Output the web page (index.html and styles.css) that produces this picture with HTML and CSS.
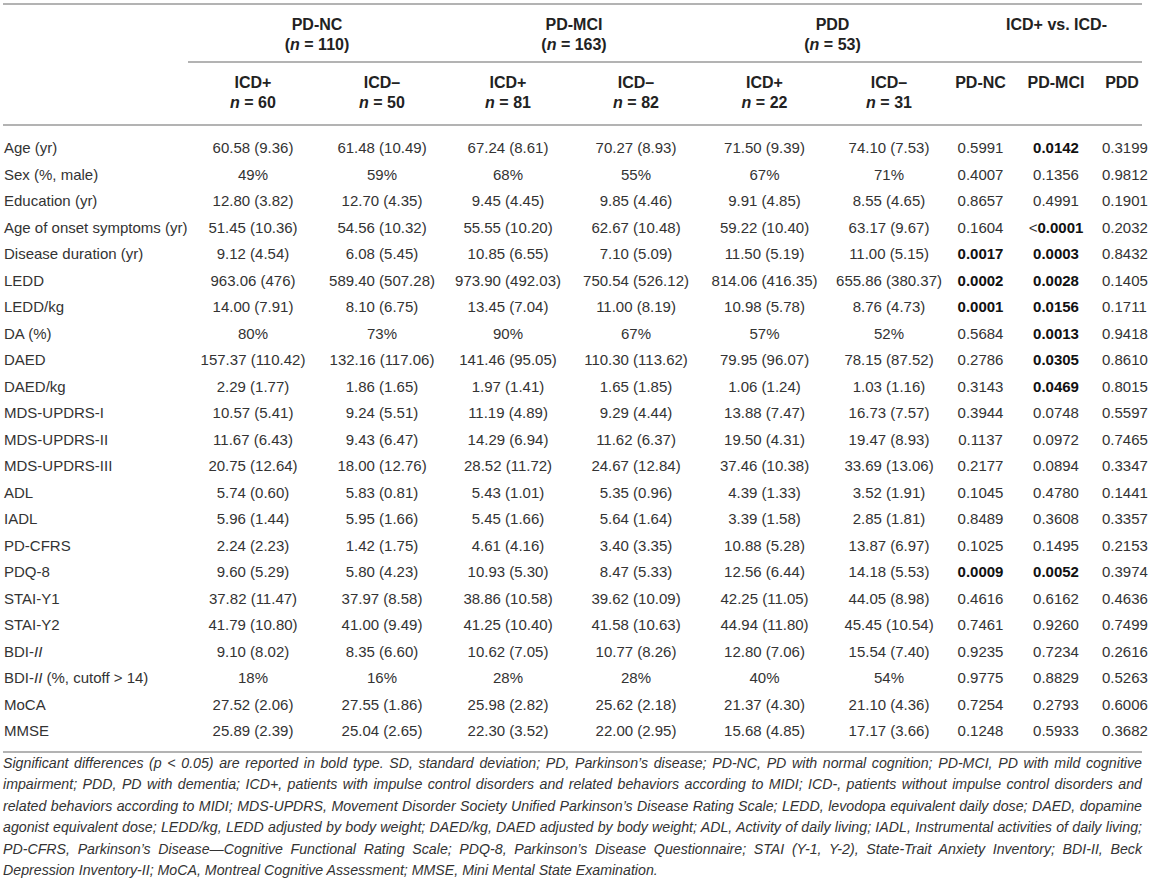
FILE: index.html
```html
<!DOCTYPE html>
<html lang="en">
<head>
    <meta charset="UTF-8">
    <meta name="viewport" content="width=device-width, initial-scale=1.0">
    <title>ICD+ vs. ICD- by cognitive group</title>
    <link rel="stylesheet" href="styles.css">
</head>
<body>

    <div class="page">
        <table class="stats">
            <colgroup>
                <col class="col-label">
                <col class="col-a">
                <col class="col-b">
                <col class="col-c">
                <col class="col-d">
                <col class="col-e">
                <col class="col-f">
                <col class="col-p1">
                <col class="col-p2">
                <col class="col-p3">
            </colgroup>
            <thead>
                <tr class="group-row">
                    <th class="blank"></th>
                    <th colspan="2" class="group">PD-NC<br>(<i>n</i> = 110)</th>
                    <th colspan="2" class="group">PD-MCI<br>(<i>n</i> = 163)</th>
                    <th colspan="2" class="group group-pdd">PDD<br>(<i>n</i> = 53)</th>
                    <th colspan="3" class="group group-cmp">ICD+ vs. ICD-</th>
                </tr>
                <tr class="sub-row">
                    <th class="blank"></th>
                    <th>ICD+<br><i>n</i> = 60</th>
                    <th>ICD–<br><i>n</i> = 50</th>
                    <th>ICD+<br><i>n</i> = 81</th>
                    <th>ICD–<br><i>n</i> = 82</th>
                    <th>ICD+<br><i>n</i> = 22</th>
                    <th>ICD–<br><i>n</i> = 31</th>
                    <th>PD-NC</th>
                    <th>PD-MCI</th>
                    <th>PDD</th>
                </tr>
            </thead>
            <tbody>
                <tr><td>Age (yr)</td><td>60.58 (9.36)</td><td>61.48 (10.49)</td><td>67.24 (8.61)</td><td>70.27 (8.93)</td><td>71.50 (9.39)</td><td>74.10 (7.53)</td><td>0.5991</td><td><b>0.0142</b></td><td>0.3199</td></tr>
                <tr><td>Sex (%, male)</td><td>49%</td><td>59%</td><td>68%</td><td>55%</td><td>67%</td><td>71%</td><td>0.4007</td><td>0.1356</td><td>0.9812</td></tr>
                <tr><td>Education (yr)</td><td>12.80 (3.82)</td><td>12.70 (4.35)</td><td>9.45 (4.45)</td><td>9.85 (4.46)</td><td>9.91 (4.85)</td><td>8.55 (4.65)</td><td>0.8657</td><td>0.4991</td><td>0.1901</td></tr>
                <tr><td>Age of onset symptoms (yr)</td><td>51.45 (10.36)</td><td>54.56 (10.32)</td><td>55.55 (10.20)</td><td>62.67 (10.48)</td><td>59.22 (10.40)</td><td>63.17 (9.67)</td><td>0.1604</td><td>&lt;<b>0.0001</b></td><td>0.2032</td></tr>
                <tr><td>Disease duration (yr)</td><td>9.12 (4.54)</td><td>6.08 (5.45)</td><td>10.85 (6.55)</td><td>7.10 (5.09)</td><td>11.50 (5.19)</td><td>11.00 (5.15)</td><td><b>0.0017</b></td><td><b>0.0003</b></td><td>0.8432</td></tr>
                <tr><td>LEDD</td><td>963.06 (476)</td><td>589.40 (507.28)</td><td>973.90 (492.03)</td><td>750.54 (526.12)</td><td>814.06 (416.35)</td><td>655.86 (380.37)</td><td><b>0.0002</b></td><td><b>0.0028</b></td><td>0.1405</td></tr>
                <tr><td>LEDD/kg</td><td>14.00 (7.91)</td><td>8.10 (6.75)</td><td>13.45 (7.04)</td><td>11.00 (8.19)</td><td>10.98 (5.78)</td><td>8.76 (4.73)</td><td><b>0.0001</b></td><td><b>0.0156</b></td><td>0.1711</td></tr>
                <tr><td>DA (%)</td><td>80%</td><td>73%</td><td>90%</td><td>67%</td><td>57%</td><td>52%</td><td>0.5684</td><td><b>0.0013</b></td><td>0.9418</td></tr>
                <tr><td>DAED</td><td>157.37 (110.42)</td><td>132.16 (117.06)</td><td>141.46 (95.05)</td><td>110.30 (113.62)</td><td>79.95 (96.07)</td><td>78.15 (87.52)</td><td>0.2786</td><td><b>0.0305</b></td><td>0.8610</td></tr>
                <tr><td>DAED/kg</td><td>2.29 (1.77)</td><td>1.86 (1.65)</td><td>1.97 (1.41)</td><td>1.65 (1.85)</td><td>1.06 (1.24)</td><td>1.03 (1.16)</td><td>0.3143</td><td><b>0.0469</b></td><td>0.8015</td></tr>
                <tr><td>MDS-UPDRS-I</td><td>10.57 (5.41)</td><td>9.24 (5.51)</td><td>11.19 (4.89)</td><td>9.29 (4.44)</td><td>13.88 (7.47)</td><td>16.73 (7.57)</td><td>0.3944</td><td>0.0748</td><td>0.5597</td></tr>
                <tr><td>MDS-UPDRS-II</td><td>11.67 (6.43)</td><td>9.43 (6.47)</td><td>14.29 (6.94)</td><td>11.62 (6.37)</td><td>19.50 (4.31)</td><td>19.47 (8.93)</td><td>0.1137</td><td>0.0972</td><td>0.7465</td></tr>
                <tr><td>MDS-UPDRS-III</td><td>20.75 (12.64)</td><td>18.00 (12.76)</td><td>28.52 (11.72)</td><td>24.67 (12.84)</td><td>37.46 (10.38)</td><td>33.69 (13.06)</td><td>0.2177</td><td>0.0894</td><td>0.3347</td></tr>
                <tr><td>ADL</td><td>5.74 (0.60)</td><td>5.83 (0.81)</td><td>5.43 (1.01)</td><td>5.35 (0.96)</td><td>4.39 (1.33)</td><td>3.52 (1.91)</td><td>0.1045</td><td>0.4780</td><td>0.1441</td></tr>
                <tr><td>IADL</td><td>5.96 (1.44)</td><td>5.95 (1.66)</td><td>5.45 (1.66)</td><td>5.64 (1.64)</td><td>3.39 (1.58)</td><td>2.85 (1.81)</td><td>0.8489</td><td>0.3608</td><td>0.3357</td></tr>
                <tr><td>PD-CFRS</td><td>2.24 (2.23)</td><td>1.42 (1.75)</td><td>4.61 (4.16)</td><td>3.40 (3.35)</td><td>10.88 (5.28)</td><td>13.87 (6.97)</td><td>0.1025</td><td>0.1495</td><td>0.2153</td></tr>
                <tr><td>PDQ-8</td><td>9.60 (5.29)</td><td>5.80 (4.23)</td><td>10.93 (5.30)</td><td>8.47 (5.33)</td><td>12.56 (6.44)</td><td>14.18 (5.53)</td><td><b>0.0009</b></td><td><b>0.0052</b></td><td>0.3974</td></tr>
                <tr><td>STAI-Y1</td><td>37.82 (11.47)</td><td>37.97 (8.58)</td><td>38.86 (10.58)</td><td>39.62 (10.09)</td><td>42.25 (11.05)</td><td>44.05 (8.98)</td><td>0.4616</td><td>0.6162</td><td>0.4636</td></tr>
                <tr><td>STAI-Y2</td><td>41.79 (10.80)</td><td>41.00 (9.49)</td><td>41.25 (10.40)</td><td>41.58 (10.63)</td><td>44.94 (11.80)</td><td>45.45 (10.54)</td><td>0.7461</td><td>0.9260</td><td>0.7499</td></tr>
                <tr><td>BDI-<i>II</i></td><td>9.10 (8.02)</td><td>8.35 (6.60)</td><td>10.62 (7.05)</td><td>10.77 (8.26)</td><td>12.80 (7.06)</td><td>15.54 (7.40)</td><td>0.9235</td><td>0.7234</td><td>0.2616</td></tr>
                <tr><td>BDI-<i>II</i> (%, cutoff &gt; 14)</td><td>18%</td><td>16%</td><td>28%</td><td>28%</td><td>40%</td><td>54%</td><td>0.9775</td><td>0.8829</td><td>0.5263</td></tr>
                <tr><td>MoCA</td><td>27.52 (2.06)</td><td>27.55 (1.86)</td><td>25.98 (2.82)</td><td>25.62 (2.18)</td><td>21.37 (4.30)</td><td>21.10 (4.36)</td><td>0.7254</td><td>0.2793</td><td>0.6006</td></tr>
                <tr><td>MMSE</td><td>25.89 (2.39)</td><td>25.04 (2.65)</td><td>22.30 (3.52)</td><td>22.00 (2.95)</td><td>15.68 (4.85)</td><td>17.17 (3.66)</td><td>0.1248</td><td>0.5933</td><td>0.3682</td></tr>
            </tbody>
        </table>

        <p class="note">Significant differences (p &lt; 0.05) are reported in bold type. SD, standard deviation; PD, Parkinson’s disease; PD-NC, PD with normal cognition; PD-MCI, PD with mild cognitive impairment; PDD, PD with dementia; ICD+, patients with impulse control disorders and related behaviors according to MIDI; ICD-, patients without impulse control disorders and related behaviors according to MIDI; MDS-UPDRS, Movement Disorder Society Unified Parkinson’s Disease Rating Scale; LEDD, levodopa equivalent daily dose; DAED, dopamine agonist equivalent dose; LEDD/kg, LEDD adjusted by body weight; DAED/kg, DAED adjusted by body weight; ADL, Activity of daily living; IADL, Instrumental activities of daily living; PD-CFRS, Parkinson’s Disease—Cognitive Functional Rating Scale; PDQ-8, Parkinson’s Disease Questionnaire; STAI (Y-1, Y-2), State-Trait Anxiety Inventory; BDI-II, Beck Depression Inventory-II; MoCA, Montreal Cognitive Assessment; MMSE, Mini Mental State Examination.</p>
    </div>

</body>
</html>
```

FILE: styles.css
```css
body {
    margin: 0;
    background: #fff;
    color: #333;
    font-family: "Liberation Sans", Arial, sans-serif;
}
.page {
    width: 1139px;
    padding: 3px 0 0 3px;
}
.stats {
    width: 1139px;
    table-layout: fixed;
    border-collapse: separate;
    border-spacing: 0;
    font-size: 15px;
}
.col-label { width: 185px; }
.col-a { width: 130px; }
.col-b { width: 128px; }
.col-c { width: 124px; }
.col-d { width: 132px; }
.col-e { width: 125px; }
.col-f { width: 124px; }
.col-p1 { width: 59px; }
.col-p2 { width: 92px; }
.col-p3 { width: 40px; }

.stats th {
    font-size: 16px;
    font-weight: bold;
    color: #222;
    line-height: 20px;
    text-align: center;
    vertical-align: top;
    padding: 0;
}
.stats th i {
    font-weight: bold;
}
.group-row th {
    border-top: 2px solid #b3b3b3;
    padding-top: 10px;
    padding-bottom: 6px;
}
.group-row .group {
    border-bottom: 2px solid #b3b3b3;
}
.group-row .group-pdd {
    padding-left: 12px;
}
.group-row .group-cmp {
    padding-left: 20px;
}
.sub-row th {
    padding-top: 10px;
    padding-bottom: 11px;
    border-bottom: 2px solid #b3b3b3;
}
.stats td {
    padding: 0;
    line-height: 26.5px;
    text-align: center;
    white-space: nowrap;
}
.stats td:first-child {
    text-align: left;
    padding-left: 1px;
}
.stats td b {
    color: #111;
}
.stats tbody tr:first-child td {
    padding-top: 9px;
}
.stats tbody tr:last-child td {
    padding-bottom: 6px;
    border-bottom: 2px solid #b3b3b3;
}
.note {
    margin: 0;
    font-size: 14.2px;
    font-style: italic;
    line-height: 21.5px;
    text-align: justify;
    color: #333;
}
```
